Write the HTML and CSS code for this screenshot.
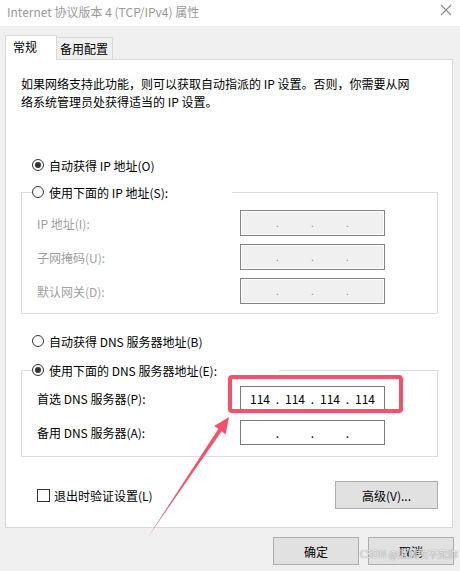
FILE: index.html
```html
<!DOCTYPE html>
<html lang="zh-CN">
<head>
<meta charset="utf-8">
<title>Internet 协议版本 4 (TCP/IPv4) 属性</title>
<link rel="stylesheet" href="styles.css">
</head>
<body>
<div class="titlebar">
  <span class="title">Internet 协议版本 4 (TCP/IPv4) 属性</span>
  <svg class="close" width="12" height="12" viewBox="0 0 12 12"><path d="M1 1L11 11M11 1L1 11" stroke="#8a8a8a" stroke-width="1.1" fill="none"/></svg>
</div>
<div class="tabs">
  <div class="tab active">常规</div>
  <div class="tab">备用配置</div>
</div>
<div class="panel">
  <p class="desc">如果网络支持此功能，则可以获取自动指派的 IP 设置。否则，你需要从网<br>络系统管理员处获得适当的 IP 设置。</p>
  <div class="radio-row first"><span class="radio on"></span><span>自动获得 IP 地址(O)</span></div>
  <fieldset class="group g1">
    <legend class="legend l1"><span class="radio"></span><span>使用下面的 IP 地址(S):</span></legend>
    <div class="row disabled"><span class="lbl">IP 地址(I):</span><span class="ip off"><i></i><b>.</b><i></i><b>.</b><i></i><b>.</b><i></i></span></div>
    <div class="row disabled"><span class="lbl">子网掩码(U):</span><span class="ip off"><i></i><b>.</b><i></i><b>.</b><i></i><b>.</b><i></i></span></div>
    <div class="row disabled"><span class="lbl">默认网关(D):</span><span class="ip off"><i></i><b>.</b><i></i><b>.</b><i></i><b>.</b><i></i></span></div>
  </fieldset>
  <div class="radio-row dns1"><span class="radio"></span><span>自动获得 DNS 服务器地址(B)</span></div>
  <fieldset class="group g2">
    <legend class="legend l2"><span class="radio on"></span><span>使用下面的 DNS 服务器地址(E):</span></legend>
    <div class="row r2"><span class="lbl">首选 DNS 服务器(P):</span><span class="ip on2"><i>114</i><b>.</b><i>114</i><b>.</b><i>114</i><b>.</b><i>114</i></span></div>
    <div class="row r2"><span class="lbl">备用 DNS 服务器(A):</span><span class="ip on2"><i></i><b>.</b><i></i><b>.</b><i></i><b>.</b><i></i></span></div>
  </fieldset>
  <div class="bottom-row">
    <label class="check"><span class="box"></span><span>退出时验证设置(L)</span></label>
    <span class="btn adv">高级(V)...</span>
  </div>
</div>
<div class="footer">
  <span class="btn">确定</span>
  <span class="btn">取消</span>
</div>
<div class="highlight"></div>
<svg class="arrow" width="460" height="571" viewBox="0 0 460 571"><polygon points="229,417 225.5,434.5 221.6,431.2 148,537 218.4,428.8 214.2,426" fill="#f8506a"/></svg>
<div class="watermark">CSDN @清风吹不死你</div>
</body>
</html>
```

FILE: styles.css
```css
* { box-sizing: border-box; }
html, body { margin: 0; padding: 0; }
body {
  width: 460px;
  height: 571px;
  overflow: hidden;
  background: #f0f0f0;
  font-family: "Noto Sans CJK SC", "Microsoft YaHei", sans-serif;
  font-size: 12px;
  color: #000;
  position: relative;
}
.titlebar {
  height: 26px;
  background: #fff;
  display: flex;
  align-items: center;
  justify-content: space-between;
  padding: 0 8px 2px 7px;
}
.title { color: #999; font-size: 12px; line-height: 16px; }
.close { margin-top: -4px; }
.tabs {
  margin-top: 9px;
  padding-left: 5px;
  display: flex;
  align-items: flex-end;
  height: 24px;
  position: relative;
  z-index: 2;
}
.tab {
  height: 22px;
  width: 56px;
  border: 1px solid #d9d9d9;
  border-left: none;
  border-bottom: none;
  background: #f0f0f0;
  padding-left: 3px;
  line-height: 22px;
  font-size: 12px;
}
.tab.active {
  width: 52px;
  height: 25px;
  margin-bottom: -1px;
  background: #fff;
  border-left: 1px solid #d9d9d9;
  padding-left: 7px;
  line-height: 22px;
}
.panel {
  margin-left: 5px;
  width: 448px;
  height: 469px;
  background: #fff;
  border: 1px solid #d9d9d9;
  padding: 15px 14px 0 15px;
  position: relative;
}
.desc {
  margin: 0;
  line-height: 18px;
  white-space: nowrap;
}
.radio-row {
  height: 18px;
  display: flex;
  align-items: center;
  padding-left: 11px;
  gap: 5px;
}
.radio-row.first { margin-top: 45px; }
.radio-row.dns1 { margin-top: 18px; }
.radio {
  width: 12px;
  height: 12px;
  border: 1px solid #333;
  border-radius: 50%;
  background: #fff;
  display: inline-flex;
  align-items: center;
  justify-content: center;
  flex: none;
}
.radio.on::after {
  content: "";
  width: 6px;
  height: 6px;
  border-radius: 50%;
  background: #333;
}
.group {
  margin: 0;
  border: 1px solid #dcdcdc;
  padding: 0 0 9px 10px;
  min-inline-size: 0;
}
.g1 { margin-top: 9px; }
.g2 { margin-top: 11px; padding-bottom: 11px; }
.legend {
  padding: 0;
  height: 18px;
  display: flex;
  align-items: center;
  gap: 5px;
  background: #fff;
}
.l1 { width: 200px; }
.l2 { width: 247px; }
.row {
  display: flex;
  align-items: center;
  height: 26px;
  margin-top: 8px;
  padding-left: 5px;
}
.g1 .row:first-of-type { margin-top: 9px; }
.row.r2 { height: 25px; margin-top: 9px; }
.g2 .row:first-of-type { margin-top: 7px; }
.lbl { width: 203px; flex: none; }
.disabled .lbl { color: #a0a0a0; }
.ip {
  width: 145px;
  height: 100%;
  border: 1px solid #7a7a7a;
  display: flex;
  justify-content: center;
  align-items: center;
  background: #fff;
}
.ip.off {
  background: #f0f0f0;
  box-shadow: inset 0 0 0 1px #fff;
  border-color: #838383;
}
.ip i {
  font-style: normal;
  width: 31px;
  text-align: center;
  line-height: 16px;
}
.ip b {
  font-weight: normal;
  width: 4px;
  text-align: center;
  line-height: 16px;
}
.ip.off b { color: #8a8a9a; font-size: 10px; }
.bottom-row {
  margin-top: 24px;
  height: 28px;
  display: flex;
  align-items: center;
  justify-content: space-between;
}
.check {
  display: flex;
  align-items: center;
  gap: 4px;
  padding-left: 16px;
}
.box {
  width: 13px;
  height: 13px;
  border: 1px solid #333;
  background: #fff;
}
.btn {
  width: 86px;
  height: 28px;
  border: 1px solid #adadad;
  background: #e1e1e1;
  display: flex;
  align-items: center;
  justify-content: center;
}
.btn.adv { width: 103px; }
.footer {
  margin-top: 9px;
  display: flex;
  justify-content: flex-end;
  gap: 9px;
  padding-right: 6px;
}
.highlight {
  position: absolute;
  left: 228px;
  top: 375px;
  width: 175px;
  height: 38px;
  border: 4px solid #f8506a;
  border-radius: 4px;
}
.arrow {
  position: absolute;
  left: 0;
  top: 0;
}
.watermark {
  position: absolute;
  left: 360px;
  top: 547px;
  font-size: 10px;
  line-height: 13px;
  color: rgba(255, 255, 255, 0.8);
  text-shadow: 0 0 1px #9a9a9a, 0 0 1px #9a9a9a;
  white-space: nowrap;
}
```
